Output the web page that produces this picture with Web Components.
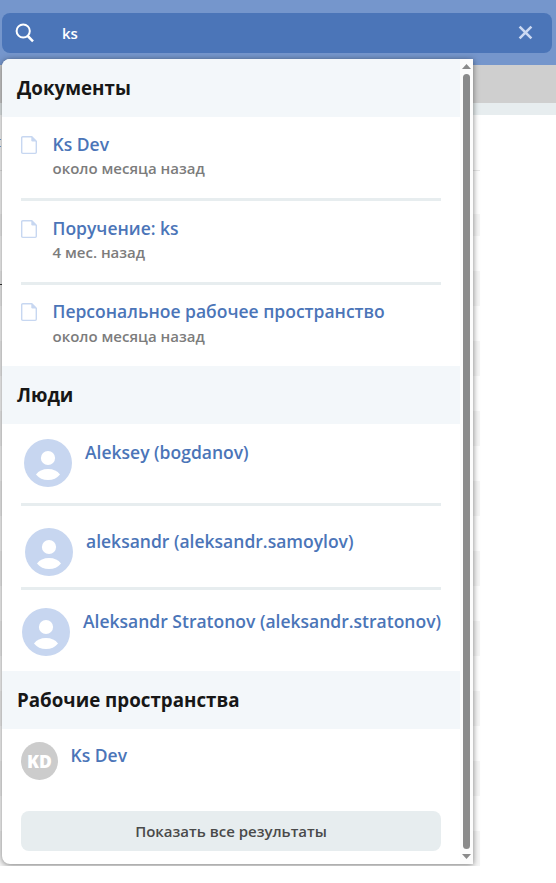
<!DOCTYPE html>
<html lang="ru">
<head>
<meta charset="utf-8">
<title>Поиск</title>
<style>
html,body{margin:0;height:883px;overflow:hidden;background:#fff;font-family:"Open Sans","Noto Sans",sans-serif}
</style>
</head>
<body>
<search-page></search-page>
<script>
function define(name, html) {
  const t = document.createElement('template');
  t.innerHTML = html;
  customElements.define(name, class extends HTMLElement {
    constructor() {
      super();
      this.attachShadow({mode: 'open'}).append(t.content.cloneNode(true));
    }
  });
}

define('search-bar', `
<style>
:host{display:flex;align-items:center;box-sizing:border-box;height:40px;margin:0 4px 0 2px;padding:0 19px 0 13px;background:#4b75b8;border-radius:8px;color:#fff}
.lens{width:20px;height:20px;margin-right:27px;margin-top:-1px}
.q{flex:1;font-size:15px;line-height:20px;font-weight:600}
.x{width:15px;height:15px;margin-top:-1px}
svg{display:block}
</style>
<svg class="lens" viewBox="0 0 20 20" fill="none" stroke="#fff" stroke-width="2"><circle cx="8.2" cy="8" r="6.6"/><path d="M12.8 13L18 18.3" stroke-width="2.5"/></svg>
<div class="q"><slot></slot></div>
<svg class="x" viewBox="0 0 15 15" stroke="#cbd9f2" stroke-width="2.6"><path d="M1.6 1.6L13.4 13.4M13.4 1.6L1.6 13.4"/></svg>`);

define('section-title', `
<style>
:host{display:flex;align-items:center;height:58px;box-sizing:border-box;padding-left:15px;background:#f3f7fa;color:#171717;font-size:18.75px;line-height:24px;font-weight:700;white-space:nowrap}
</style><slot></slot>`);

define('doc-icon', `
<style>:host{display:block;width:16px;height:19px}svg{display:block}</style>
<svg width="16" height="19" viewBox="0 0 16 19"><path d="M2 .7H10.8L15.3 5.2V16.3Q15.3 17.4 14.2 17.4H1.8Q.7 17.4.7 16.3V1.8Q.7.7 1.8.7Z" fill="#fff" stroke="#c7d7f1" stroke-width="1.4"/><path d="M10.3.5L15.5 5.5H11.5Q10.3 5.5 10.3 4.3Z" fill="#c7d7f1"/></svg>`);

define('person-icon', `
<style>:host{display:block;width:48px;height:48px}svg{display:block}</style>
<svg width="48" height="48" viewBox="0 0 48 48"><circle cx="24" cy="24" r="24" fill="#c7d6f0"/><circle cx="24" cy="19" r="7.1" fill="#fff"/><path d="M12 35.5Q16 30 24 30T36 35.5Q31.5 41 24 41T12 35.5Z" fill="#fff"/></svg>`);

define('initials-badge', `
<style>:host{display:flex;align-items:center;justify-content:center;width:37px;height:38px;border-radius:50%;background:#ccc;color:#fff;font-size:17.5px;line-height:24px;font-weight:800}</style><span><slot></slot></span>`);

define('result-row', `
<style>
:host{display:flex;align-items:flex-start;box-sizing:border-box;height:81px;margin:0 19px;white-space:nowrap}
:host([line]){border-bottom:3px solid #e7edef;height:84px}
:host([short]){height:82px}
.icon{margin:var(--icon-top,19px) 0 0 var(--icon-left,0px);flex:none}
.text{margin:var(--text-top,15px) 0 0 var(--gap,15.5px)}
.name{color:#4b75b8;font-size:17.5px;line-height:25px;font-weight:600}
.note{color:#7c7c7c;font-size:15px;line-height:24px;font-weight:600;margin-top:var(--note-shift,-1px)}
</style>
<div class="icon"><slot name="icon"></slot></div>
<div class="text"><div class="name"><slot></slot></div><div class="note"><slot name="note"></slot></div></div>`);

define('all-button', `
<style>:host{display:flex;align-items:center;justify-content:center;height:40px;border-radius:8px;background:#e7edef;color:#4a4a4a;font-size:15px;line-height:20px;font-weight:600}</style><slot></slot>`);

define('scroll-rail', `
<style>
:host{display:flex;flex-direction:column;align-items:center;width:13px;height:100%;box-sizing:border-box;padding:5px 0;background:#fcfcfc}
.thumb{flex:1;width:7px;margin:5px 0;border-radius:4px;background:#8b8b8b}
svg{display:block}
</style>
<svg width="9" height="5"><path d="M0 5L4.5 0L9 5Z" fill="#8b8b8b"/></svg>
<div class="thumb"></div>
<svg width="9" height="5"><path d="M0 0H9L4.5 5Z" fill="#8b8b8b"/></svg>`);

define('results-panel', `
<style>
:host{display:flex;width:471px;height:805px;background:#fff;border-radius:8px 0 0 8px;box-shadow:0 1px 6px rgba(0,0,0,.5)}
.main{width:458px;overflow:hidden;border-radius:8px 0 0 8px}
all-button{margin:0 19px}
</style>
<div class="main">
<section-title>Документы</section-title>
<result-row line><doc-icon slot="icon"></doc-icon>Ks Dev<span slot="note">около месяца назад</span></result-row>
<result-row line><doc-icon slot="icon"></doc-icon>Поручение: ks<span slot="note">4 мес. назад</span></result-row>
<result-row style="--icon-top:18px;--text-top:14px;--note-shift:0px"><doc-icon slot="icon"></doc-icon>Персональное рабочее пространство<span slot="note">около месяца назад</span></result-row>
<section-title>Люди</section-title>
<result-row line short style="--icon-top:15px;--icon-left:3px;--text-top:16px;--gap:13px"><person-icon slot="icon"></person-icon>Aleksey (bogdanov)</result-row>
<result-row line style="--icon-top:22px;--icon-left:4px;--text-top:23px;--gap:13px"><person-icon slot="icon"></person-icon>aleksandr (aleksandr.samoylov)</result-row>
<result-row style="--icon-top:18px;--icon-left:1px;--text-top:19px;--gap:13px"><person-icon slot="icon"></person-icon>Aleksandr Stratonov (aleksandr.stratonov)</result-row>
<section-title>Рабочие пространства</section-title>
<result-row style="height:82px;--icon-top:13px;--text-top:14px;--gap:12.5px"><initials-badge slot="icon">KD</initials-badge>Ks Dev</result-row>
<all-button>Показать все результаты</all-button>
</div>
<scroll-rail></scroll-rail>`);

define('search-page', `
<style>
:host{display:block;position:relative;width:556px;height:883px;overflow:hidden}
.top{height:65px;background:#7596cc;box-sizing:border-box;padding-top:13px}
.gray{height:38px;background:#cfcfcf}
.pale{height:12px;background:#e7edef}
.lead{width:480px;height:55px;border-bottom:1px solid #e8e8e8}
.gap{height:43px}
.first{width:480px;height:22px;background:#f6f6f6}
.rows{width:480px;height:630px;background:repeating-linear-gradient(#fff 0 35px,#f6f6f6 35px 70px)}
.clip{position:absolute;inset:0 0 17px 0;overflow:hidden}
results-panel{position:absolute;left:2px;top:59px}
.mark{position:absolute;left:0;width:1px;height:1px}
</style>
<div class="top"><search-bar>ks</search-bar></div>
<div class="gray"></div><div class="pale"></div>
<div class="lead"></div><div class="gap"></div><div class="first"></div><div class="rows"></div>
<div class="mark" style="top:139px;background:#79a9dd"></div>
<div class="mark" style="top:146px;background:#79a9dd"></div>
<div class="mark" style="top:284px;width:2px;background:#333"></div>
<div class="clip"><results-panel></results-panel></div>`);
</script>
</body>
</html>
